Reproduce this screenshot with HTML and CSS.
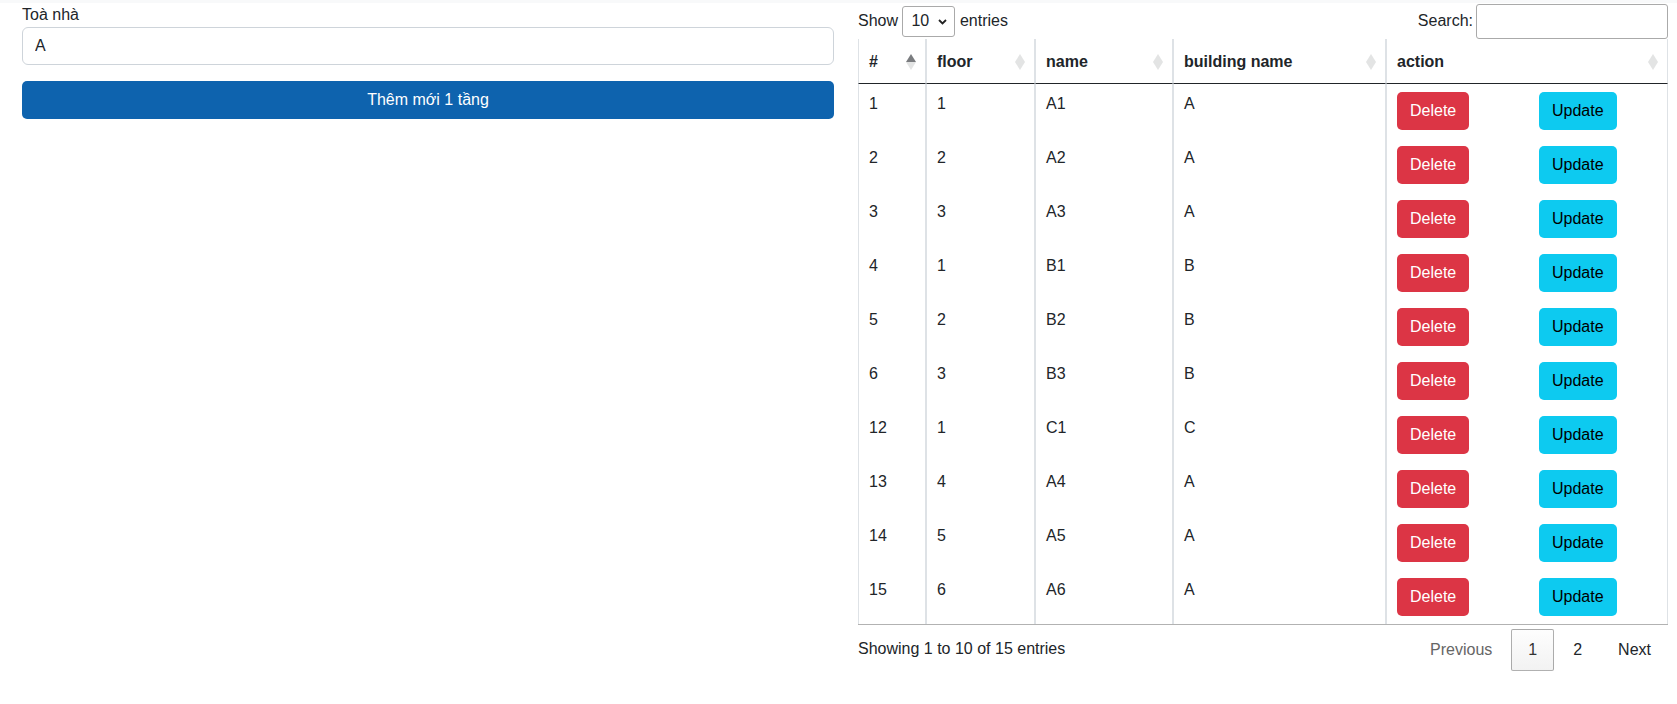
FILE: index.html
```html
<!DOCTYPE html>
<html lang="vi">
<head>
    <meta charset="UTF-8">
    <meta name="viewport" content="width=device-width, initial-scale=1.0">
    <title>Quản lý tầng</title>
    <link rel="stylesheet" href="styles.css">
</head>
<body>
    <div class="topbar"></div>
    <div class="page">
        <form class="floor-form">
            <label for="building" class="form-label">Toà nhà</label>
            <input type="text" id="building" name="building" class="form-control" value="A">
            <button type="submit" class="btn btn-add">Thêm mới 1 tầng</button>
        </form>

        <div class="table-wrap">
            <div class="table-top">
                <label class="length">Show
                    <span class="select-box">
                        <select name="length">
                            <option>10</option>
                            <option>25</option>
                            <option>50</option>
                        </select>
                        <svg class="chevron" width="9" height="6" viewBox="0 0 9 6"><path d="M1 1l3.5 3.5L8 1" fill="none" stroke="#222" stroke-width="1.8"/></svg>
                    </span>
                    entries</label>
                <label class="search">Search:<input type="search"></label>
            </div>

            <table class="floors">
                <thead>
                    <tr>
                        <th class="c-id sorted">#</th>
                        <th class="c-floor">floor</th>
                        <th class="c-name">name</th>
                        <th class="c-building">building name</th>
                        <th class="c-action">action</th>
                    </tr>
                </thead>
                <tbody>
                    <tr><td>1</td><td>1</td><td>A1</td><td>A</td><td><div class="actions"><button class="btn btn-delete">Delete</button><button class="btn btn-update">Update</button></div></td></tr>
                    <tr><td>2</td><td>2</td><td>A2</td><td>A</td><td><div class="actions"><button class="btn btn-delete">Delete</button><button class="btn btn-update">Update</button></div></td></tr>
                    <tr><td>3</td><td>3</td><td>A3</td><td>A</td><td><div class="actions"><button class="btn btn-delete">Delete</button><button class="btn btn-update">Update</button></div></td></tr>
                    <tr><td>4</td><td>1</td><td>B1</td><td>B</td><td><div class="actions"><button class="btn btn-delete">Delete</button><button class="btn btn-update">Update</button></div></td></tr>
                    <tr><td>5</td><td>2</td><td>B2</td><td>B</td><td><div class="actions"><button class="btn btn-delete">Delete</button><button class="btn btn-update">Update</button></div></td></tr>
                    <tr><td>6</td><td>3</td><td>B3</td><td>B</td><td><div class="actions"><button class="btn btn-delete">Delete</button><button class="btn btn-update">Update</button></div></td></tr>
                    <tr><td>12</td><td>1</td><td>C1</td><td>C</td><td><div class="actions"><button class="btn btn-delete">Delete</button><button class="btn btn-update">Update</button></div></td></tr>
                    <tr><td>13</td><td>4</td><td>A4</td><td>A</td><td><div class="actions"><button class="btn btn-delete">Delete</button><button class="btn btn-update">Update</button></div></td></tr>
                    <tr><td>14</td><td>5</td><td>A5</td><td>A</td><td><div class="actions"><button class="btn btn-delete">Delete</button><button class="btn btn-update">Update</button></div></td></tr>
                    <tr><td>15</td><td>6</td><td>A6</td><td>A</td><td><div class="actions"><button class="btn btn-delete">Delete</button><button class="btn btn-update">Update</button></div></td></tr>
                </tbody>
            </table>

            <div class="table-bottom">
                <div class="info">Showing 1 to 10 of 15 entries</div>
                <div class="paging"><a class="page-btn disabled">Previous</a><a class="page-btn current">1</a><a class="page-btn">2</a><a class="page-btn">Next</a></div>
            </div>
        </div>
    </div>
</body>
</html>
```
FILE: styles.css
```css
body {
    margin: 0;
    font-family: "Liberation Sans", Arial, sans-serif;
    font-size: 16px;
    line-height: 24px;
    color: #212529;
    background: #fff;
}
.topbar {
    height: 3px;
    background: #f8f9fa;
}
.page {
    display: grid;
    grid-template-columns: 812px 810px;
    column-gap: 24px;
    padding-left: 22px;
    align-items: start;
}

/* left form */
.floor-form {
    display: flex;
    flex-direction: column;
}
.form-label {
    display: block;
    height: 24px;
}
.form-control {
    box-sizing: border-box;
    height: 38px;
    padding: 6px 12px;
    font: inherit;
    color: #212529;
    border: 1px solid #ced4da;
    border-radius: 6px;
    margin: 0 0 16px;
}
.btn {
    box-sizing: border-box;
    height: 38px;
    padding: 6px 12px;
    font: inherit;
    line-height: 24px;
    border: 1px solid transparent;
    border-radius: 5px;
    cursor: pointer;
}
.btn-add {
    width: 100%;
    background: #0e63ae;
    color: #fff;
}

/* datatable */
.table-top {
    display: flex;
    justify-content: space-between;
    align-items: center;
    height: 36px;
}
.select-box {
    position: relative;
    display: inline-block;
    vertical-align: middle;
}
.select-box select {
    appearance: none;
    -webkit-appearance: none;
    box-sizing: border-box;
    width: 53px;
    height: 31px;
    padding: 0 0 0 8px;
    font: inherit;
    color: #212529;
    background: #fff;
    border: 1px solid #aaa;
    border-radius: 3px;
}
.chevron {
    position: absolute;
    right: 8px;
    top: 13px;
}
.search input {
    box-sizing: border-box;
    width: 192px;
    height: 35px;
    margin-left: 3px;
    padding: 5px;
    font: inherit;
    border: 1px solid #aaa;
    border-radius: 3px;
    vertical-align: middle;
}

.floors {
    width: 810px;
    table-layout: fixed;
    border-collapse: separate;
    border-spacing: 0;
    border-bottom: 1px solid rgba(0, 0, 0, 0.3);
}
.floors th,
.floors td {
    box-sizing: border-box;
    text-align: left;
    vertical-align: top;
    border-left: 1px solid #dee2e6;
    border-right: 1px solid #dee2e6;
}
.floors th {
    position: relative;
    height: 45px;
    padding: 11px 26px 9px 10px;
    font-weight: bold;
    border-bottom: 1px solid #212529;
}
.floors td {
    height: 54px;
    padding: 8px 10px;
}
.c-id { width: 68px; }
.c-floor { width: 109px; }
.c-name { width: 138px; }
.c-building { width: 213px; }

/* sort arrows */
.floors th::before,
.floors th::after {
    content: "";
    position: absolute;
    right: 9px;
    width: 0;
    height: 0;
    border-left: 5px solid transparent;
    border-right: 5px solid transparent;
    opacity: 0.125;
}
.floors th::before {
    bottom: calc(50% - 1px);
    border-bottom: 8px solid #212529;
}
.floors th::after {
    top: calc(50% + 1px);
    border-top: 8px solid #212529;
}
.floors th.sorted::before {
    opacity: 0.6;
}

.actions {
    display: grid;
    grid-template-columns: 1fr 1fr;
    column-gap: 24px;
    justify-items: start;
}
.btn-delete {
    background: #dc3545;
    color: #fff;
}
.btn-update {
    background: #0dcaf0;
    color: #000;
}

.table-bottom {
    display: flex;
    justify-content: space-between;
    align-items: flex-start;
}
.info {
    padding-top: 12px;
}
.paging {
    padding-top: 4px;
    display: flex;
}
.page-btn {
    display: inline-block;
    box-sizing: border-box;
    min-width: 24px;
    padding: 8px 16px;
    margin-left: 2px;
    border: 1px solid transparent;
    border-radius: 2px;
    color: #212529;
    cursor: pointer;
}
.page-btn.disabled {
    color: #666;
    cursor: default;
}
.page-btn.current {
    color: #333;
    border-color: rgba(0, 0, 0, 0.3);
    background: linear-gradient(to bottom, rgba(230, 230, 230, 0.05) 0%, rgba(0, 0, 0, 0.05) 100%);
}
```
